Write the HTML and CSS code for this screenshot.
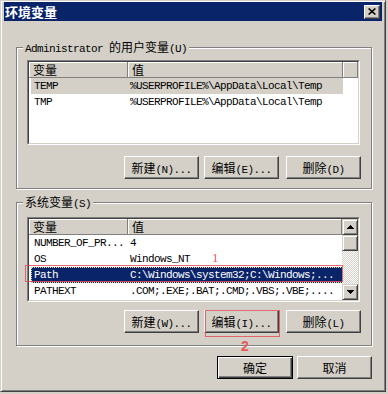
FILE: index.html
```html
<!DOCTYPE html>
<html lang="zh-CN">
<head>
  <meta charset="UTF-8" />
  <title>环境变量</title>
  <link rel="stylesheet" href="styles.css">
</head>
<body>

  <div class="window">
    <div class="titlebar">
      <span class="title">环境变量</span>
      <span class="close-btn">
        <svg width="8" height="7" viewBox="0 0 8 7"><path d="M0.6 0.5 L7.4 6.5 M7.4 0.5 L0.6 6.5" stroke="#000" stroke-width="1.6" fill="none"/></svg>
      </span>
    </div>

    <fieldset class="group group-user">
      <legend>Administrator <span class="zh">的用户变量</span>(U)</legend>
      <div class="list">
        <div class="list-in">
          <div class="list-main">
            <div class="list-head">
              <div class="col-name"><span class="zh">变量</span></div>
              <div class="col-value"><span class="zh">值</span></div>
              <div class="col-fill"></div>
            </div>
            <div class="row row-dim"><span>TEMP</span><span>%USERPROFILE%\AppData\Local\Temp</span></div>
            <div class="row"><span>TMP</span><span>%USERPROFILE%\AppData\Local\Temp</span></div>
          </div>
        </div>
      </div>
      <div class="btn-row">
        <button class="btn"><span class="zh">新建</span>(N)...</button>
        <button class="btn"><span class="zh">编辑</span>(E)...</button>
        <button class="btn btn-del"><span class="zh">删除</span>(D)</button>
      </div>
    </fieldset>

    <fieldset class="group group-sys">
      <legend><span class="zh">系统变量</span>(S)</legend>
      <div class="list">
        <div class="list-in">
          <div class="list-main">
            <div class="list-head">
              <div class="col-name"><span class="zh">变量</span></div>
              <div class="col-value wide"><span class="zh">值</span></div>
            </div>
            <div class="row"><span>NUMBER_OF_PR...</span><span>4</span></div>
            <div class="row"><span>OS</span><span>Windows_NT</span></div>
            <div class="row row-sel"><span>Path</span><span>C:\Windows\system32;C:\Windows;...</span></div>
            <div class="row"><span>PATHEXT</span><span>.COM;.EXE;.BAT;.CMD;.VBS;.VBE;....</span></div>
          </div>
          <div class="scroll">
            <div class="sb-btn">
              <svg width="7" height="4" shape-rendering="crispEdges"><rect x="3" y="0" width="1" height="1"/><rect x="2" y="1" width="3" height="1"/><rect x="1" y="2" width="5" height="1"/><rect x="0" y="3" width="7" height="1"/></svg>
            </div>
            <div class="sb-thumb"></div>
            <div class="sb-gap"></div>
            <div class="sb-btn">
              <svg width="7" height="4" shape-rendering="crispEdges"><rect x="0" y="0" width="7" height="1"/><rect x="1" y="1" width="5" height="1"/><rect x="2" y="2" width="3" height="1"/><rect x="3" y="3" width="1" height="1"/></svg>
            </div>
          </div>
        </div>
      </div>
      <div class="btn-row">
        <button class="btn"><span class="zh">新建</span>(W)...</button>
        <button class="btn"><span class="zh">编辑</span>(I)...</button>
        <button class="btn btn-del"><span class="zh">删除</span>(L)</button>
      </div>
    </fieldset>

    <div class="footer">
      <button class="btn btn-default"><span class="zh">确定</span></button>
      <button class="btn"><span class="zh">取消</span></button>
    </div>

    <!-- annotations -->
    <div class="mark mark-path"></div>
    <div class="mark mark-edit"></div>
    <span class="num num-1">1</span>
    <span class="num num-2">2</span>
  </div>

</body>
</html>
```

FILE: styles.css
```css
body {
  margin: 0;
  background: #d4d0c8;
  font-family: "Liberation Mono", "Noto Sans CJK SC", monospace;
  font-size: 11px;
  letter-spacing: -0.6px;
  color: #000;
}
.zh {
  font-family: "Noto Sans CJK SC", sans-serif;
  font-size: 12px;
  letter-spacing: 0;
}
.window {
  position: relative;
  width: 386px;
  height: 392px;
  box-sizing: border-box;
  border: 1px solid;
  border-color: #d4d0c8 #404040 #404040 #d4d0c8;
  box-shadow: inset 1px 1px #fff, inset -1px -1px #808080;
  padding: 1px 3px 3px 3px;
}
.titlebar {
  height: 19px;
  background: #0a246a;
  display: flex;
  align-items: center;
  justify-content: space-between;
  padding: 0 2px 0 1px;
}
.title {
  color: #fff;
  font-family: "Noto Sans CJK SC", sans-serif;
  font-weight: bold;
  font-size: 13px;
  letter-spacing: 0;
}
.close-btn {
  width: 16px;
  height: 14px;
  box-sizing: border-box;
  background: #d4d0c8;
  border: 1px solid;
  border-color: #fff #404040 #404040 #fff;
  box-shadow: inset -1px -1px #808080;
  display: flex;
  align-items: center;
  justify-content: center;
}

/* cadres */
.group {
  margin: 19px 10px 0 12px;
  padding: 6px 10px 9px 10px;
  border: 1px solid #808080;
  box-shadow: inset 1px 1px #fff, 1px 1px #fff;
  min-width: 0;
}
.group legend {
  height: 14px;
  padding: 0 2px;
  margin-left: -4px;
  line-height: 14px;
  background: #d4d0c8;
}
.group-sys {
  margin-top: 6px;
  padding-top: 8px;
  padding-bottom: 12px;
}

/* listes */
.list {
  border: 1px solid;
  border-color: #808080 #fff #fff #808080;
  margin-right: 1px;
}
.list-in {
  height: 81px;
  border: 1px solid;
  border-color: #404040 #d4d0c8 #d4d0c8 #404040;
  background: #fff;
  display: flex;
  overflow: hidden;
}
.list-main {
  flex: 1;
  min-width: 0;
}
.list-head {
  display: flex;
  height: 16px;
}
.list-head div {
  box-sizing: border-box;
  height: 16px;
  background: #d4d0c8;
  border-right: 1px solid #808080;
  border-bottom: 1px solid #808080;
  box-shadow: inset 1px 1px #fff;
  padding-left: 4px;
  line-height: 15px;
}
.col-name { width: 99px; }
.col-value { width: 215px; }
.col-value.wide { flex: 1; }
.col-fill { flex: 1; }
.row {
  display: grid;
  grid-template-columns: 96px 1fr;
  width: 312px;
  height: 16px;
  line-height: 16px;
  margin-left: 2px;
  padding-left: 3px;
  box-sizing: border-box;
  white-space: nowrap;
}
.row-dim {
  background: #d4d0c8;
}
.row-sel {
  background: #0a246a;
  color: #fff;
  outline: 1px dotted #e8d890;
  outline-offset: -1px;
}

/* barre de defilement */
.scroll {
  width: 16px;
  display: flex;
  flex-direction: column;
  background: repeating-conic-gradient(#fff 0 25%, #d4d0c8 0 50%) 0 0 / 2px 2px;
}
.sb-btn, .sb-thumb {
  height: 16px;
  box-sizing: border-box;
  background: #d4d0c8;
  border: 1px solid;
  border-color: #d4d0c8 #404040 #404040 #d4d0c8;
  box-shadow: inset 1px 1px #fff, inset -1px -1px #808080;
  display: flex;
  align-items: center;
  justify-content: center;
}
.sb-gap { flex: 1; }

/* boutons */
.btn-row {
  display: flex;
  justify-content: flex-end;
  gap: 5px;
  margin-top: 11px;
}
.group-sys .btn-row { margin-top: 8px; }
.btn {
  width: 75px;
  height: 23px;
  box-sizing: border-box;
  padding: 0;
  font: inherit;
  letter-spacing: inherit;
  color: #000;
  background: #d4d0c8;
  border: 1px solid;
  border-color: #fff #404040 #404040 #fff;
  box-shadow: inset -1px -1px #808080;
}
.btn-del { margin-left: 2px; }
.btn-default {
  width: 76px;
  border-color: #000;
  box-shadow: inset 1px 1px #fff, inset -1px -1px #404040, inset -2px -2px #808080;
}
.footer {
  display: flex;
  justify-content: flex-end;
  gap: 4px;
  margin: 10px 10px 0 0;
}

/* annotations rouges */
.mark {
  position: absolute;
  border: 1px solid rgba(226, 80, 90, 0.85);
}
.mark-path {
  left: 24px;
  top: 264px;
  width: 316px;
  height: 15px;
}
.mark-edit {
  left: 204px;
  top: 309px;
  width: 73px;
  height: 25px;
}
.num {
  position: absolute;
  color: #e65a5a;
  letter-spacing: 0;
}
.num-1 {
  left: 211px;
  top: 249px;
  font: 13px "Liberation Serif", serif;
}
.num-2 {
  left: 240px;
  top: 337px;
  font: bold 14px "Liberation Sans", sans-serif;
}
```
